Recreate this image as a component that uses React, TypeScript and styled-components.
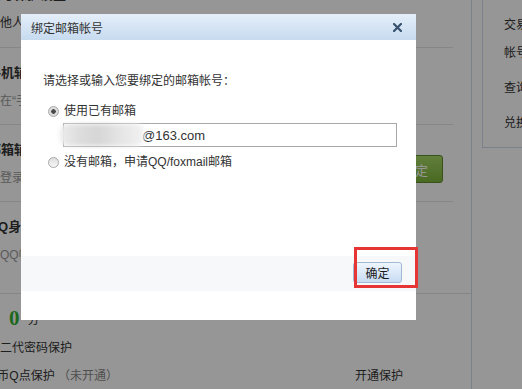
import React from "react";
import styled, { createGlobalStyle } from "styled-components";

const GlobalStyle = createGlobalStyle`
  html, body { margin: 0; padding: 0; }
  body {
    width: 522px;
    height: 389px;
    overflow: hidden;
    background: #fff;
    font-family: "Liberation Sans", "Noto Sans CJK SC", sans-serif;
    font-size: 12px;
    color: #333;
  }
  * { box-sizing: border-box; }
`;

const Stage = styled.div`
  position: relative;
  width: 522px;
  height: 389px;
  overflow: hidden;
`;

const Page = styled.div`
  display: flex;
  align-items: flex-start;
  margin-left: -12px;
`;

const LeftCol = styled.div`
  width: 484px;
  margin-top: -30px;
  min-height: 430px;
  border-right: 1px solid #cfdbe9;
  flex: none;
`;

const Section = styled.div<{ $h: number; $full?: boolean }>`
  height: ${(p) => p.$h}px;
  width: ${(p) => (p.$full ? "483px" : "465px")};
  border-bottom: 1px solid #e4e4e4;
  padding: 17px 10px 0 0;
  display: flex;
  justify-content: space-between;
  align-items: flex-start;
`;

const SectionText = styled.div`
  display: flex;
  flex-direction: column;
  gap: 12px;
`;

const Title = styled.div`
  font-size: 13px;
  font-weight: bold;
  line-height: 16px;
  color: #333;
  white-space: nowrap;
`;

const Desc = styled.div<{ $dark?: boolean }>`
  line-height: 16px;
  color: ${(p) => (p.$dark ? "#333" : "#999")};
  white-space: nowrap;
`;

const GreenButton = styled.div`
  margin-top: 13px;
  width: 56px;
  height: 28px;
  border: 1px solid #5f8c2c;
  border-radius: 3px;
  background: linear-gradient(#a6d866, #7db43c);
  color: #fff;
  font-size: 13px;
  display: flex;
  align-items: center;
  justify-content: center;
`;

const ScoreBlock = styled.div`
  padding-top: 8px;
`;

const ScoreRow = styled.div`
  height: 32px;
  display: flex;
  align-items: center;
  gap: 8px;
  padding-left: 21px;
`;

const Score = styled.span`
  font-family: "Liberation Serif", serif;
  font-weight: bold;
  font-size: 21px;
  color: #33b233;
`;

const Unit = styled.span`
  color: #333;
  font-size: 12px;
`;

const ProtectRow = styled.div`
  display: grid;
  grid-template-columns: 1fr 116px;
  line-height: 28px;
  color: #333;
  white-space: nowrap;
`;

const Muted = styled.span`
  color: #888;
`;

const RightBox = styled.div`
  margin-left: 10px;
  width: 80px;
  height: 148px;
  border-left: 1px solid #cfdbe9;
  border-bottom: 1px solid #cfdbe9;
  padding: 17px 0 0 21px;
  flex: none;
`;

const SideItem = styled.div`
  line-height: 16px;
  color: #333;
  white-space: nowrap;
  margin-bottom: 19px;
  &:first-child { margin-bottom: 12px; }
`;

const Overlay = styled.div`
  position: absolute;
  inset: 0;
  background: rgba(0, 0, 0, 0.41);
`;

const Dialog = styled.div`
  position: absolute;
  left: 21px;
  top: 14px;
  width: 395px;
  height: 306px;
  background: #fff;
  display: flex;
  flex-direction: column;
  padding-bottom: 29px;
`;

const DialogHeader = styled.div`
  height: 26px;
  flex: none;
  display: flex;
  align-items: center;
  justify-content: space-between;
  padding: 0 14px 0 10px;
  background: linear-gradient(#e4eef9, #c7dbef);
  color: #333;
  font-size: 12px;
`;

const CloseIcon = styled.svg`
  width: 9px;
  height: 9px;
  display: block;
`;

const DialogBody = styled.div`
  flex: 1;
  padding: 33px 0 0 22px;
  display: flex;
  flex-direction: column;
`;

const Prompt = styled.div`
  line-height: 16px;
  color: #333;
`;

const RadioRow = styled.label<{ $mt: number }>`
  margin-top: ${(p) => p.$mt}px;
  margin-left: 5px;
  display: flex;
  align-items: center;
  gap: 5px;
  line-height: 16px;
  color: #333;
`;

const RadioDot = styled.span<{ $checked?: boolean }>`
  width: 11px;
  height: 11px;
  border-radius: 50%;
  border: 1px solid #a9a9a9;
  background: ${(p) =>
    p.$checked ? "radial-gradient(circle, #4a4a4a 0 2px, #dcdcdc 2.5px)" : "linear-gradient(#dedede, #f6f6f6)"};
  flex: none;
`;

const EmailInput = styled.div`
  margin-top: 4px;
  margin-left: 20px;
  width: 334px;
  height: 24px;
  border: 1px solid #a8a8a8;
  display: flex;
  align-items: center;
  font-size: 13px;
  color: #333;
`;

const Smudge = styled.span`
  width: 84px;
  height: 22px;
  margin-left: -4px;
  margin-right: -2px;
  background: linear-gradient(90deg, #ececec, #dcdcdc 25%, #d6d6d6 45%, #e4e4e4 70%, #f2f2f2);
  filter: blur(2px);
  border-radius: 8px;
  flex: none;
`;

const DialogFooter = styled.div`
  height: 35px;
  flex: none;
  background: #f7f8fa;
  display: flex;
  justify-content: flex-end;
  align-items: flex-start;
  padding: 6px 14px 0 0;
`;

const PrimaryButton = styled.button`
  width: 49px;
  height: 21px;
  border: 1px solid #a2b9d6;
  border-radius: 3px;
  background: linear-gradient(#eef5fd, #c8dcf4);
  font-family: "Liberation Sans", "Noto Sans CJK SC", sans-serif;
  font-size: 12px;
  color: #1a1a1a;
  padding: 0;
`;

const Highlight = styled.div`
  position: absolute;
  left: 354px;
  top: 247px;
  width: 64px;
  height: 41px;
  border: 3px solid #e63535;
`;

export default function App() {
  return (
    <>
      <GlobalStyle />
      <Stage>
        <Page>
          <LeftCol>
            <Section $h={78}>
              <SectionText>
                <Title>帐号保护设置</Title>
                <Desc $dark>防他人盗用帐号</Desc>
              </SectionText>
            </Section>
            <Section $h={77}>
              <SectionText>
                <Title>手机辅助验证</Title>
                <Desc>可在“手机QQ”中确认登录</Desc>
              </SectionText>
            </Section>
            <Section $h={77}>
              <SectionText>
                <Title>邮箱辅助验证</Title>
                <Desc>在登录时可使用邮箱找回密码</Desc>
              </SectionText>
              <GreenButton>设定</GreenButton>
            </Section>
            <Section $h={92} $full>
              <SectionText>
                <Title>QQ身份验证</Title>
                <Desc>将QQ帐号与身份证绑定</Desc>
              </SectionText>
            </Section>
            <ScoreBlock>
              <ScoreRow>
                <Score>0</Score>
                <Unit>分</Unit>
              </ScoreRow>
              <ProtectRow>
                <span>第二代密码保护</span>
                <span />
              </ProtectRow>
              <ProtectRow>
                <span>
                  Q币Q点保护 <Muted>（未开通）</Muted>
                </span>
                <span>开通保护</span>
              </ProtectRow>
            </ScoreBlock>
          </LeftCol>
          <RightBox>
            <SideItem>交易记录</SideItem>
            <SideItem>帐号申诉</SideItem>
            <SideItem>查询记录</SideItem>
            <SideItem>兑换中心</SideItem>
          </RightBox>
        </Page>
        <Overlay />
        <Dialog>
          <DialogHeader>
            <span>绑定邮箱帐号</span>
            <CloseIcon viewBox="0 0 9 9">
              <path d="M1 1 L8 8 M8 1 L1 8" stroke="#37516f" strokeWidth="2.2" strokeLinecap="square" />
            </CloseIcon>
          </DialogHeader>
          <DialogBody>
            <Prompt>请选择或输入您要绑定的邮箱帐号：</Prompt>
            <RadioRow $mt={14}>
              <RadioDot $checked />
              <span>使用已有邮箱</span>
            </RadioRow>
            <EmailInput>
              <Smudge />
              <span>@163.com</span>
            </EmailInput>
            <RadioRow $mt={7}>
              <RadioDot />
              <span>没有邮箱，申请QQ/foxmail邮箱</span>
            </RadioRow>
          </DialogBody>
          <DialogFooter>
            <PrimaryButton>确定</PrimaryButton>
          </DialogFooter>
        </Dialog>
        <Highlight />
      </Stage>
    </>
  );
}
